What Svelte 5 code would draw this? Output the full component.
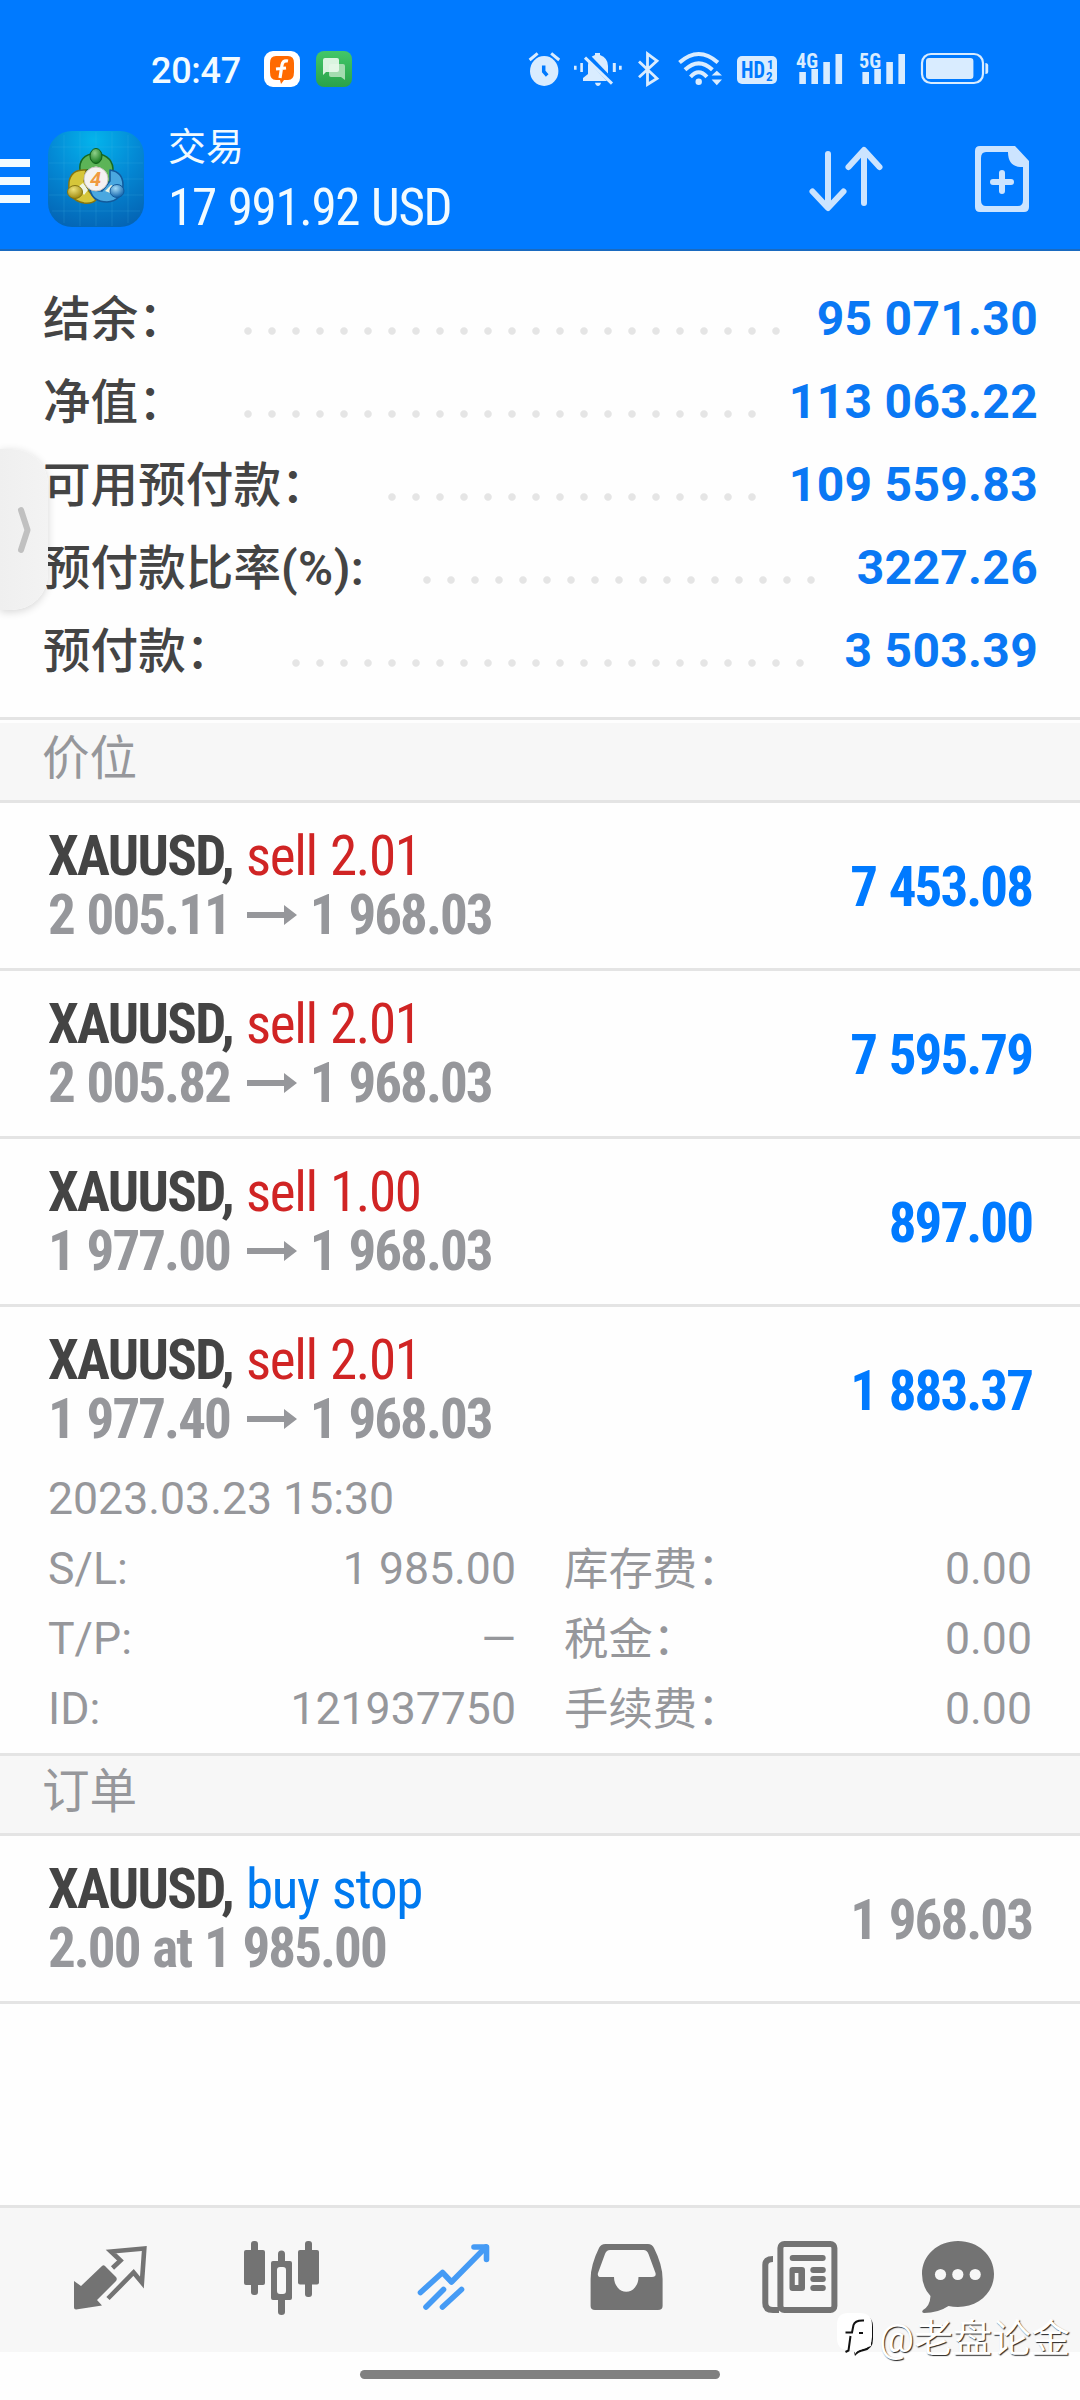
<script lang="ts">
    type Position = {
        symbol: string;
        side: string;
        open: string;
        current: string;
        profit: string;
    };

    // indent = where the dotted leader starts, dots = how many dots it has
    const account = [
        { label: "结余：", unit: "", value: "95 071.30", indent: 193, dots: 23 },
        { label: "净值：", unit: "", value: "113 063.22", indent: 193, dots: 22 },
        { label: "可用预付款：", unit: "", value: "109 559.83", indent: 337, dots: 16 },
        { label: "预付款比率", unit: "(%):", value: "3227.26", indent: 372, dots: 17 },
        { label: "预付款：", unit: "", value: "3 503.39", indent: 241, dots: 22 },
    ];

    const positions: Position[] = [
        { symbol: "XAUUSD", side: "sell 2.01", open: "2 005.11", current: "1 968.03", profit: "7 453.08" },
        { symbol: "XAUUSD", side: "sell 2.01", open: "2 005.82", current: "1 968.03", profit: "7 595.79" },
        { symbol: "XAUUSD", side: "sell 1.00", open: "1 977.00", current: "1 968.03", profit: "897.00" },
        { symbol: "XAUUSD", side: "sell 2.01", open: "1 977.40", current: "1 968.03", profit: "1 883.37" },
    ];

    const details = [
        ["S/L:", "1 985.00", "库存费：", "0.00"],
        ["T/P:", "—", "税金：", "0.00"],
        ["ID:", "121937750", "手续费：", "0.00"],
    ];

    let expanded = 3;
</script>

<div class="page">
    <header>
        <div class="status">
            <span class="time">20:47</span>
            <svg class="mini" width="36" height="36" viewBox="0 0 36 36">
                <rect width="36" height="36" rx="9" fill="#fff" />
                <path d="M12 5h12q6 0 6 7v9q0 8-6 8h-4l-3 4-1-4h-4q-6 0-6-8v-9q0-7 6-7z" fill="#ff6a00" />
                <path d="M24 10q-5-1-6 4l-2 13M12 18l10-1" fill="none" stroke="#fff" stroke-width="3.2" />
            </svg>
            <svg class="mini" width="36" height="36" viewBox="0 0 36 36">
                <defs>
                    <linearGradient id="green" x1="0" y1="0" x2="0" y2="1">
                        <stop offset="0" stop-color="#42c768" />
                        <stop offset="1" stop-color="#2aa24a" />
                    </linearGradient>
                </defs>
                <rect width="36" height="36" rx="8" fill="url(#green)" />
                <path d="M15 13h12q2 0 2 2v14l-4-3H15q-2 0-2-2v-9q0-2 2-2z" fill="#a4dcb0" />
                <path d="M9 7h12q2 0 2 2v10q0 2-2 2H10l-3 3V9q0-2 2-2z" fill="#e8f8ec" opacity=".92" />
            </svg>
            <svg class="tray" width="470" height="42" viewBox="0 0 470 42">
                <g fill="#d9ecff" stroke="none">
                    <ellipse cx="24.2" cy="23" rx="14.200" ry="15" />
                    <path d="M63 33v-3l5-4v-9q0-8 7-10V5h5v2q8 3 8 11v8l5 7z" />
                    <path d="M75 34.7h6q-1 3.3-3 3.3t-3-3.3z" />
                    <path d="M54 17.7h2.6v4H54zM60.3 15h2.6v9h-2.6zM92.8 15h3v9h-3zM99 17.7h2.7v4H99z" />
                    <circle cx="178.7" cy="33.7" r="3.2" />
                    <path d="M191.6 27.5h10.4l-5.2-4.7zM191.6 31.5h10.4l-5.2 5.8z" />
                    <rect x="217" y="8" width="40" height="28" rx="5" />
                    <path d="M279.3 24h6.6v12h-6.6zM291.4 21h6.6v15h-6.6zM303.3 14h6.6v22h-6.6zM315.5 6h6.6v30h-6.6z" />
                    <path d="M342.4 24h6.6v12h-6.6zM354.3 21h6.6v15h-6.6zM366.3 14h6.6v22h-6.6zM378.4 6h6.6v30h-6.6z" />
                    <rect x="406" y="10" width="47.4" height="21" rx="3" />
                    <path d="M465.4 15q2.8 0 2.8 2.5v6q0 2.5-2.8 2.5z" />
                </g>
                <g fill="none" stroke="#d9ecff" stroke-width="3">
                    <path d="M9.6 12l8-6.7M31.2 5.3l8 6.7" />
                    <path d="M68 9l24 25" stroke="#007aff" stroke-width="6" />
                    <path d="M65 9.7l27 26" />
                    <path d="M119 13.5l18 17-9.5 6V5.8l9.5 7-18 16.5" stroke-width="2.8" />
                    <path d="M159.5 14.5q19.2-17 38.4 0M165 21.8q13.7-13 27.4 0M170.5 28.8q8.2-9 16.4 0" stroke-width="4" />
                    <rect x="402" y="6" width="61" height="29" rx="9" stroke-width="2.2" />
                    <path d="M23.7 17.5v6l3.5 4" stroke="#007aff" stroke-width="3.5" />
                </g>
                <g class="tiny">
                    <text x="221" y="30" font-size="23" fill="#007aff" textLength="24" lengthAdjust="spacingAndGlyphs">HD</text>
                    <text x="247" y="21" font-size="13" fill="#007aff">1</text>
                    <text x="246" y="33" font-size="13" fill="#007aff">2</text>
                    <text x="276" y="19.5" font-size="21" fill="#d9ecff" textLength="22" lengthAdjust="spacingAndGlyphs">4G</text>
                    <text x="339" y="19.5" font-size="21" fill="#d9ecff" textLength="22" lengthAdjust="spacingAndGlyphs">5G</text>
                </g>
            </svg>
        </div>

        <div class="bar">
            <div class="menu"><i></i><i></i><i></i></div>
            <svg class="logo" width="96" height="96" viewBox="0 0 96 96">
                <defs>
                    <radialGradient id="sky" cx=".48" cy=".1" r=".95">
                        <stop offset="0" stop-color="#04b4ec" />
                        <stop offset=".5" stop-color="#0488d4" />
                        <stop offset="1" stop-color="#0464b4" />
                    </radialGradient>
                    <radialGradient id="headG" cx=".4" cy=".3" r=".7">
                        <stop offset="0" stop-color="#8fd08a" /><stop offset="1" stop-color="#14781c" />
                    </radialGradient>
                    <radialGradient id="headY" cx=".4" cy=".3" r=".7">
                        <stop offset="0" stop-color="#eee27a" /><stop offset="1" stop-color="#a08a10" />
                    </radialGradient>
                    <radialGradient id="headB" cx=".4" cy=".3" r=".7">
                        <stop offset="0" stop-color="#a4dcf8" /><stop offset="1" stop-color="#1264ac" />
                    </radialGradient>
                </defs>
                <rect width="96" height="96" rx="24" fill="url(#sky)" />
                <path d="M16 4v88M32 1v94M48 1v94M64 1v94M80 4v88M4 16h88M1 32h94M1 48h94M1 64h94M4 80h88" stroke="#4cc0f0" stroke-opacity=".18" />
                <g stroke-width="1.5" stroke-linejoin="round">
                    <path d="M32 40q-2-16 16-18 18 3 17 19 0 6-4 12l-8-14H39z" fill="#5cb457" stroke="#176b22" />
                    <path d="M38 39q-15-1-17 12-2 18 15 21 8 1 12-3l-8-10-4-9z" fill="#d6c63a" stroke="#857510" />
                    <path d="M62 39q13 2 13 15-1 16-16 17-14 0-17-12l12 1 8-10z" fill="#4aa8e0" stroke="#125a9c" />
                    <path d="M42 38q6-5 12 0l-3 2h-6zM30 56l5-4 5 7-4 5zM57 60l6-6 5 2-3 7z" fill="#eef6e4" stroke="none" />
                </g>
                <ellipse cx="48" cy="25" rx="6" ry="7.500" fill="url(#headG)" stroke="#0f5c18" />
                <ellipse cx="27" cy="61" rx="7.500" ry="6.500" fill="url(#headY)" stroke="#857510" />
                <ellipse cx="69" cy="60" rx="7" ry="6.500" fill="url(#headB)" stroke="#125a9c" />
                <circle cx="48" cy="48" r="12" fill="#f4f2f2" stroke="#c8c4c0" />
                <text x="47.5" y="55" text-anchor="middle" font-size="20" font-weight="700" font-style="italic" fill="#f09a40">4</text>
            </svg>
            <div class="heading">
                <div class="title">交易</div>
                <div class="sum">17 991.92 USD</div>
            </div>
            <svg class="sort" width="76" height="68" viewBox="0 0 76 68" fill="none" stroke="#cce4ff" stroke-width="6" stroke-linecap="round" stroke-linejoin="round">
                <path d="M20 9v53M4.5 46.5L20 63l15.500-16.500M56 58V6M40.5 22L56 5l15.500 17" />
            </svg>
            <svg class="doc" width="54" height="66" viewBox="0 0 54 66">
                <path d="M5 0h35l14 15v46q0 5-5 5H5q-5 0-5-5V5q0-5 5-5zM11 6q-5 0-5 6v42q0 6 5 6h32q5 0 5-6V21h-3q-12-1-12-15z" fill="#cce4ff" fill-rule="evenodd" />
                <path d="M27 27v18M18 36h18" stroke="#cce4ff" stroke-width="6" stroke-linecap="round" />
            </svg>
        </div>
    </header>

    <section class="account">
        {#each account as row}
            <div class="line">
                <span class="label" style="width: {row.indent}px">{row.label}<span class="unit">{row.unit}</span></span>
                <span class="dots" style="width: {row.dots * 24}px"></span>
                <b>{row.value}</b>
            </div>
        {/each}
        <div class="handle">
            <svg width="14" height="50" viewBox="0 0 14 50">
                <path d="M4 5l6.500 20L4 45" fill="none" stroke="#c0c0c0" stroke-width="6" stroke-linecap="round" stroke-linejoin="round" />
            </svg>
        </div>
    </section>

    <h2 class="first">价位</h2>
    {#each positions as p, i}
        <div class="item" class:open={i === expanded}>
            <div class="row">
                <div>
                    <div class="name">{p.symbol}, <span class="sell">{p.side}</span></div>
                    <div class="price">
                        {p.open}<svg width="50" height="20" viewBox="0 0 50 20">
                            <path d="M0 7h37V0l13 10-13 10v-7H0z" fill="#96979b" />
                        </svg>{p.current}
                    </div>
                </div>
                <div class="profit">{p.profit}</div>
            </div>
            {#if i === expanded}
                <div class="details">
                    <div class="date">2023.03.23 15:30</div>
                    {#each details as d}
                        <div class="cells">
                            <span>{d[0]}</span>
                            <span class="num">{d[1]}</span>
                            <span class="fee">{d[2]}</span>
                            <span class="num">{d[3]}</span>
                        </div>
                    {/each}
                </div>
            {/if}
        </div>
    {/each}

    <h2>订单</h2>
    <div class="item">
        <div class="row">
            <div>
                <div class="name">XAUUSD, <span class="buy">buy stop</span></div>
                <div class="price">2.00 at 1 985.00</div>
            </div>
            <div class="profit pending">1 968.03</div>
        </div>
    </div>

    <nav>
        <svg viewBox="0 0 86 86">
            <path d="M7 44l7 5 21-20q1.500-1.500 3 0l11 11q1.500 2 0 4L30 63l5 5.500-26 4q-2 0-2-2z" fill="#737373" />
            <path d="M45.5 31l8-7.500-9.500-9 33.300-3-2.400 34-8.300-10L41 61.5" fill="none" stroke="#737373" stroke-width="4.6" />
        </svg>
        <svg viewBox="0 0 86 86" fill="#737373">
            <rect x="5" y="13" width="21" height="35" rx="2" />
            <rect x="12" y="4" width="7" height="54" rx="3" />
            <path d="M34 24h17q2 0 2 2v35q0 2-2 2H34q-2 0-2-2V26q0-2 2-2zM41 30q-3 0-3 3v21q0 3 3 3h3q3 0 3-3V33q0-3-3-3z" fill-rule="evenodd" />
            <path d="M39 25v-8q0-3.500 3.500-3.500T46 17v8zM39 62h7v13q0 3-3.500 3T39 75z" />
            <rect x="59" y="13" width="21" height="34.5" rx="2" />
            <rect x="66" y="4" width="7" height="56" rx="3" />
        </svg>
        <svg viewBox="0 0 86 86" fill="none" stroke="#459bf5" stroke-width="5.6" stroke-linecap="round" stroke-linejoin="round">
            <path d="M9.5 55.5l22-20 9 9.500L75 10" />
            <path d="M63 10h12.500v12.500" />
            <path d="M15 70l17.500-17.500M31.5 70l19-17.500" />
        </svg>
        <svg viewBox="0 0 86 86">
            <path d="M22.400 7H65q4 0 6 4 8.600 17 8.600 31v27q0 4-4.600 4H12q-4.400 0-4.400-4V42q0-14 8.400-31 2-4 6.400-4zM27 13q-3.500 0-5 4l-7 19q-1 4 3 4h13a12.200 14.700 0 0 0 24.500 0H69q4.500 0 3.500-4l-7-19q-1.500-4-5-4z" fill="#737373" fill-rule="evenodd" />
        </svg>
        <svg viewBox="0 0 86 86" fill="#737373">
            <g fill="none" stroke="#737373" stroke-width="6">
                <rect x="25.4" y="7" width="54" height="66" rx="4" />
                <path d="M18 22q-7.700 0-7.700 6v38q0 7 7.700 7h6" />
            </g>
            <rect x="34.7" y="18" width="36" height="6" rx="3" />
            <path d="M37.500 30h9.500q3 0 3 3v18q0 3-3 3h-9.500q-3 0-3-3V33q0-3 3-3zM39.800 36v12h3.600V36z" fill-rule="evenodd" />
            <rect x="55.3" y="30" width="15.5" height="6" rx="3" />
            <rect x="55.3" y="39" width="15.5" height="6" rx="3" />
            <rect x="55.3" y="48" width="15.5" height="6" rx="3" />
        </svg>
        <svg viewBox="0 0 86 86">
            <path d="M43 4c20 0 36 14 36 33S63 70 43 70q-5 0-9.500-1Q23 76 9 76q-3-.5-1-3 7-4 7.500-14Q7 50 7 37C7 18 23 4 43 4z" fill="#737373" />
            <g fill="#f7f7f7">
                <circle cx="25.5" cy="37.5" r="5.6" />
                <circle cx="42.8" cy="37.5" r="5.6" />
                <circle cx="60.2" cy="37.5" r="5.6" />
            </g>
        </svg>
    </nav>

    <div class="home"><i></i></div>

    <div class="credit">
        <svg width="40" height="46" viewBox="0 0 40 46">
            <path d="M12 3h13q12 0 12 12v12q0 10-9 12-6 1-9 5l-1-4 17-6V10z" fill="#111" />
            <path d="M12 1h12q12 0 12 12v12q0 10-9 12-6 1-8 5l-1-4h-6Q1 38 1 26V13Q1 1 12 1z" fill="#fff" />
            <path d="M28 8.500q-9-.5-10.500 4.500l-1.500 7.500H9.500M23 21h4M14.500 24l-2 14.500-3 1.500" fill="none" stroke="#111" stroke-width="2" />
        </svg>
        <span>@老盘论金</span>
    </div>
</div>

<style>
    :global(body) {
        margin: 0;
        background: #fefefe;
        font-family: Roboto, "Noto Sans CJK SC", sans-serif;
    }

    .page {
        position: relative;
        display: flex;
        flex-direction: column;
        width: 1080px;
        height: 2400px;
        overflow: hidden;
        white-space: nowrap;
    }

    svg {
        display: block;
        flex: none;
    }

    header {
        height: 249px;
        background: #007aff;
        border-bottom: 2px solid #1a6ac0;
        color: #f2fbff;
    }

    .status {
        display: flex;
        align-items: center;
        box-sizing: border-box;
        height: 118px;
        padding: 20px 90px 0 151px;
    }

    .time {
        width: 113px;
        padding-top: 4px;
        font-size: 36px;
        font-weight: 500;
        letter-spacing: -0.3px;
    }

    .mini {
        margin-right: 16px;
    }

    .tray {
        margin-left: auto;
    }

    .tiny {
        font-weight: 700;
        font-stretch: 75%;
    }

    .bar {
        display: flex;
        align-items: center;
        height: 122px;
    }

    .menu {
        display: grid;
        gap: 10px;
        width: 30px;
        margin: 4px 18px 0 0;
    }

    .menu i {
        height: 8px;
        background: #f2fbff;
    }

    .heading {
        margin: 2px 0 0 24px;
    }

    .title {
        font-size: 38px;
        line-height: 50px;
    }

    .sum {
        padding-top: 5px;
        font-size: 51px;
        line-height: 62px;
        font-stretch: 75%;
        letter-spacing: -1.3px;
        word-spacing: 1.5px;
    }

    .sort {
        margin-left: auto;
    }

    .doc {
        margin: 0 51px 0 91px;
    }

    .account {
        position: relative;
        height: 439px;
        padding: 27px 43px 0;
        border-bottom: 3px solid #e4e4e4;
    }

    .line {
        display: flex;
        align-items: center;
        height: 83px;
        color: #444;
        font-size: 47.6px;
        font-weight: 500;
    }

    .label {
        flex: none;
        margin-top: -9px;
    }

    .unit {
        font-weight: 600;
        letter-spacing: 0.5px;
    }

    .dots {
        height: 24px;
        margin-top: 22px;
        background: radial-gradient(circle, #e5e5e5 3.3px, transparent 4.2px) 0 0 / 24px 24px;
    }

    .line b {
        margin: -2px -1px 0 auto;
        color: #0a78f4;
        font-size: 48px;
        letter-spacing: 0.3px;
    }

    .handle {
        position: absolute;
        top: 198px;
        left: 0;
        display: flex;
        align-items: center;
        box-sizing: border-box;
        width: 48px;
        height: 161px;
        padding-left: 17px;
        border-radius: 0 36px 36px 0;
        background: linear-gradient(90deg, #efefef, #f3f3f3);
        box-shadow: 0 2px 8px rgba(0, 0, 0, 0.16);
    }

    h2 {
        height: 77px;
        margin: 0;
        padding-left: 42px;
        border-bottom: 3px solid #e4e4e4;
        background: #f7f7f7;
        color: #96979b;
        font-size: 47.6px;
        font-weight: 400;
        line-height: 73px;
    }

    .first {
        border-top: 3px solid #fefefe;
    }

    .item {
        height: 165px;
        border-bottom: 3px solid #e4e4e4;
        color: #96979b;
    }

    .open {
        height: 446px;
    }

    .row {
        display: flex;
        justify-content: space-between;
        align-items: center;
        height: 165px;
        padding: 0 48px;
        font-size: 55px;
        font-weight: 700;
        font-stretch: 75%;
        letter-spacing: -1.95px;
        word-spacing: 2px;
        line-height: 59px;
    }

    .name {
        color: #444;
        letter-spacing: -1.7px;
    }

    .name span {
        font-weight: 400;
        letter-spacing: -1.35px;
    }

    .name .sell {
        color: #d02424;
    }

    .name .buy {
        color: #007af0;
    }

    .price {
        display: flex;
        align-items: center;
    }

    .price svg {
        margin: 0 13px 0 17px;
    }

    .profit {
        margin: 3px 0 0;
        color: #007aff;
    }

    .pending {
        color: #96979b;
    }

    .details {
        margin-top: -8px;
        padding: 0 48px;
        font-size: 44.6px;
        line-height: 70px;
    }

    .cells {
        display: grid;
        grid-template-columns: 150px 318px 200px 1fr;
        height: 70px;
    }

    .num {
        text-align: right;
    }

    .fee {
        padding: 1px 0 0 48px;
        font-size: 44.4px;
    }

    nav {
        display: grid;
        grid-template-columns: repeat(5, 172px) 148px;
        justify-items: center;
        box-sizing: border-box;
        height: 147px;
        margin-top: auto;
        padding: 29px 24px 0;
        border-top: 3px solid #e4e4e4;
        background: #f7f7f7;
    }

    nav svg {
        width: 86px;
        height: 86px;
    }

    .home {
        display: flex;
        justify-content: center;
        height: 30px;
        padding-top: 18px;
    }

    .home i {
        width: 360px;
        height: 9px;
        border-radius: 5px;
        background: #808080;
    }

    /* author mark sits over the tab bar */
    .credit {
        position: absolute;
        right: 10px;
        bottom: 37px;
        display: flex;
        align-items: center;
        gap: 3px;
        color: #fff;
        font-size: 39px;
        text-shadow: 1px 1px 1px #222;
    }
</style>
